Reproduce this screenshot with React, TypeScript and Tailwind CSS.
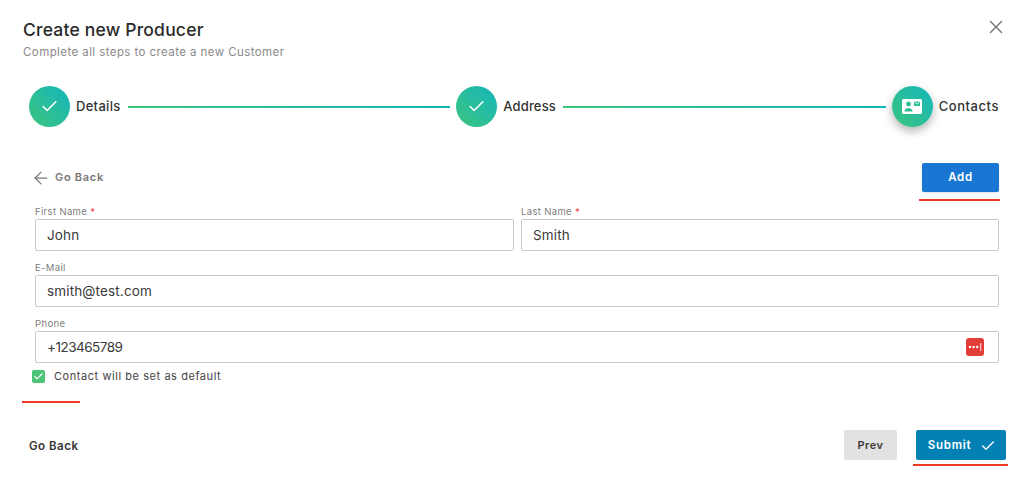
import type { ReactNode } from "react";
import { ArrowLeft, Check, X } from "lucide-react";

function StepCircle({ children, shadow }: { children: ReactNode; shadow?: boolean }) {
  return (
    <div
      className={
        "w-[41px] h-[41px] rounded-full shrink-0 flex items-center justify-center bg-gradient-to-tr from-[#3cc47c] to-[#0fb5ba] " +
        (shadow ? "shadow-[0_4px_10px_rgba(0,0,0,0.3)]" : "")
      }
    >
      {children}
    </div>
  );
}

function ContactIcon() {
  return (
    <svg width="20" height="15" viewBox="0 0 20 15">
      <rect width="20" height="15" rx="1.5" fill="#ffffff" />
      <circle cx="6.5" cy="5" r="2.4" fill="#2cbd95" />
      <path d="M2.5 12.5c0-2.4 1.8-3.6 4-3.6s4 1.2 4 3.6z" fill="#2cbd95" />
      <rect x="12" y="2.5" width="6" height="4.5" fill="#2cbd95" />
      <path d="M12.3 2.9l2.7 2.2 2.7-2.2" fill="none" stroke="#ffffff" strokeWidth="0.8" />
    </svg>
  );
}

function Field({
  label,
  value,
  required,
  className,
  valueClass,
  children,
}: {
  label: string;
  value: string;
  required?: boolean;
  className?: string;
  valueClass?: string;
  children?: ReactNode;
}) {
  return (
    <div className={"flex flex-col " + (className ?? "")}>
      <div className="h-[14px] text-[9.5px] leading-[14px] text-[#7d7d7d] tracking-[0.35px]">
        {label}
        {required && <span className="text-[#f0413c]"> *</span>}
      </div>
      <div className="h-[32px] border border-[#c9c9c9] rounded-[2px] pl-[11px] pr-[14px] flex items-center justify-between text-[13.5px] text-[#3a3a3a]">
        <span className={valueClass ?? "tracking-[0.15px]"}>{value}</span>
        {children}
      </div>
    </div>
  );
}

export default function App() {
  return (
    <div className="relative w-[1024px] h-[482px] bg-white overflow-hidden text-[#2b2b2b] font-['Inter',sans-serif]">
      {/* Header */}
      <div className="flex justify-between pl-[23px] pr-[17px] pt-[19px]">
        <div>
          <div className="text-[17.5px] leading-[22px] font-medium tracking-[0.2px] text-[#2a2a2a]">
            Create new Producer
          </div>
          <div className="mt-[3px] text-[11.5px] leading-[16px] text-[#8a8a8a] tracking-[0.42px]">
            Complete all steps to create a new Customer
          </div>
        </div>
        <X size={22} strokeWidth={1.5} className="text-[#707070] mt-[-3px]" />
      </div>

      {/* Stepper */}
      <div className="flex items-center pl-[29px] pr-[25px] mt-[26px] h-[41px]">
        <StepCircle>
          <Check size={19} strokeWidth={2} className="text-white" />
        </StepCircle>
        <span className="ml-[6px] text-[13px] font-medium tracking-[0.3px] text-[#333333]">Details</span>
        <div className="flex-1 h-[2px] ml-[7px] mr-[6px] bg-gradient-to-r from-[#3cc47c] to-[#0fb5ba]" />
        <StepCircle>
          <Check size={19} strokeWidth={2} className="text-white" />
        </StepCircle>
        <span className="ml-[6px] text-[13px] font-medium tracking-[0.15px] text-[#333333]">Address</span>
        <div className="flex-1 h-[2px] ml-[7px] mr-[6px] bg-gradient-to-r from-[#3cc47c] to-[#0fb5ba]" />
        <StepCircle shadow>
          <ContactIcon />
        </StepCircle>
        <span className="ml-[6px] text-[13px] font-medium tracking-[0.55px] text-[#333333]">Contacts</span>
      </div>

      {/* Contact form */}
      <div className="ml-[35px] mr-[25px] mt-[36px]">
        <div className="flex items-center justify-between h-[29px]">
          <div className="flex items-center gap-[4px] ml-[-4px] text-[11px] font-semibold tracking-[0.7px] text-[#777777]">
            <ArrowLeft size={20} strokeWidth={1.5} />
            Go Back
          </div>
          <div className="relative w-[77px] h-[29px] rounded-[2px] bg-[#1976d2] shadow-sm flex items-center justify-center text-[11.5px] font-semibold tracking-[0.6px] text-white">
            Add
            <div className="absolute left-[-3px] right-[-1px] top-[36px] h-[2px] bg-[#ee3a24]" />
          </div>
        </div>

        <div className="flex gap-[7px] mt-[13px]">
          <Field label="First Name" value="John" required className="flex-1" />
          <Field label="Last Name" value="Smith" required className="w-[478px]" />
        </div>
        <Field label="E-Mail" value="smith@test.com" className="mt-[10px]" />
        <Field label="Phone" value="+123465789" valueClass="tracking-[-0.5px]" className="mt-[10px]">
          <svg width="18" height="18" viewBox="0 0 18 18">
            <rect width="18" height="18" rx="3" fill="#e23d37" />
            <circle cx="4" cy="9" r="1.2" fill="#ffffff" />
            <circle cx="7.6" cy="9" r="1.2" fill="#ffffff" />
            <circle cx="11.2" cy="9" r="1.2" fill="#ffffff" />
            <rect x="14.3" y="5" width="0.9" height="8" fill="#ffffff" />
          </svg>
        </Field>

        <div className="flex items-center ml-[-3px] mt-[7px] h-[13px]">
          <div className="w-[13px] h-[13px] rounded-[2px] bg-[#4cc477] flex items-center justify-center">
            <Check size={11} strokeWidth={2.5} className="text-white" />
          </div>
          <span className="ml-[9px] text-[11px] tracking-[0.56px] text-[#444444]">Contact will be set as default</span>
        </div>
      </div>

      <div className="ml-[22px] mt-[18px] w-[58px] h-[2px] bg-[#ee3a24]" />

      {/* Footer */}
      <div className="flex items-center justify-between pl-[29px] pr-[18px] mt-[27px] h-[30px]">
        <span className="mt-[3px] text-[11.5px] font-semibold tracking-[0.5px] text-[#333333]">Go Back</span>
        <div className="flex gap-[19px]">
          <div className="w-[53px] h-[30px] pt-[1px] rounded-[2px] bg-[#e2e2e2] flex items-center justify-center text-[11px] font-semibold tracking-[0.5px] text-[#3a3a3a]">
            Prev
          </div>
          <div className="relative w-[90px] h-[30px] pt-[2px] pl-[2px] rounded-[2px] bg-[#0381b4] flex items-center justify-center gap-[9px] text-[11.5px] font-semibold tracking-[0.7px] text-white">
            Submit
            <Check size={16} strokeWidth={2} />
            <div className="absolute left-[-3px] right-[-2px] top-[34px] h-[2px] bg-[#ee3a24]" />
          </div>
        </div>
      </div>
    </div>
  );
}
